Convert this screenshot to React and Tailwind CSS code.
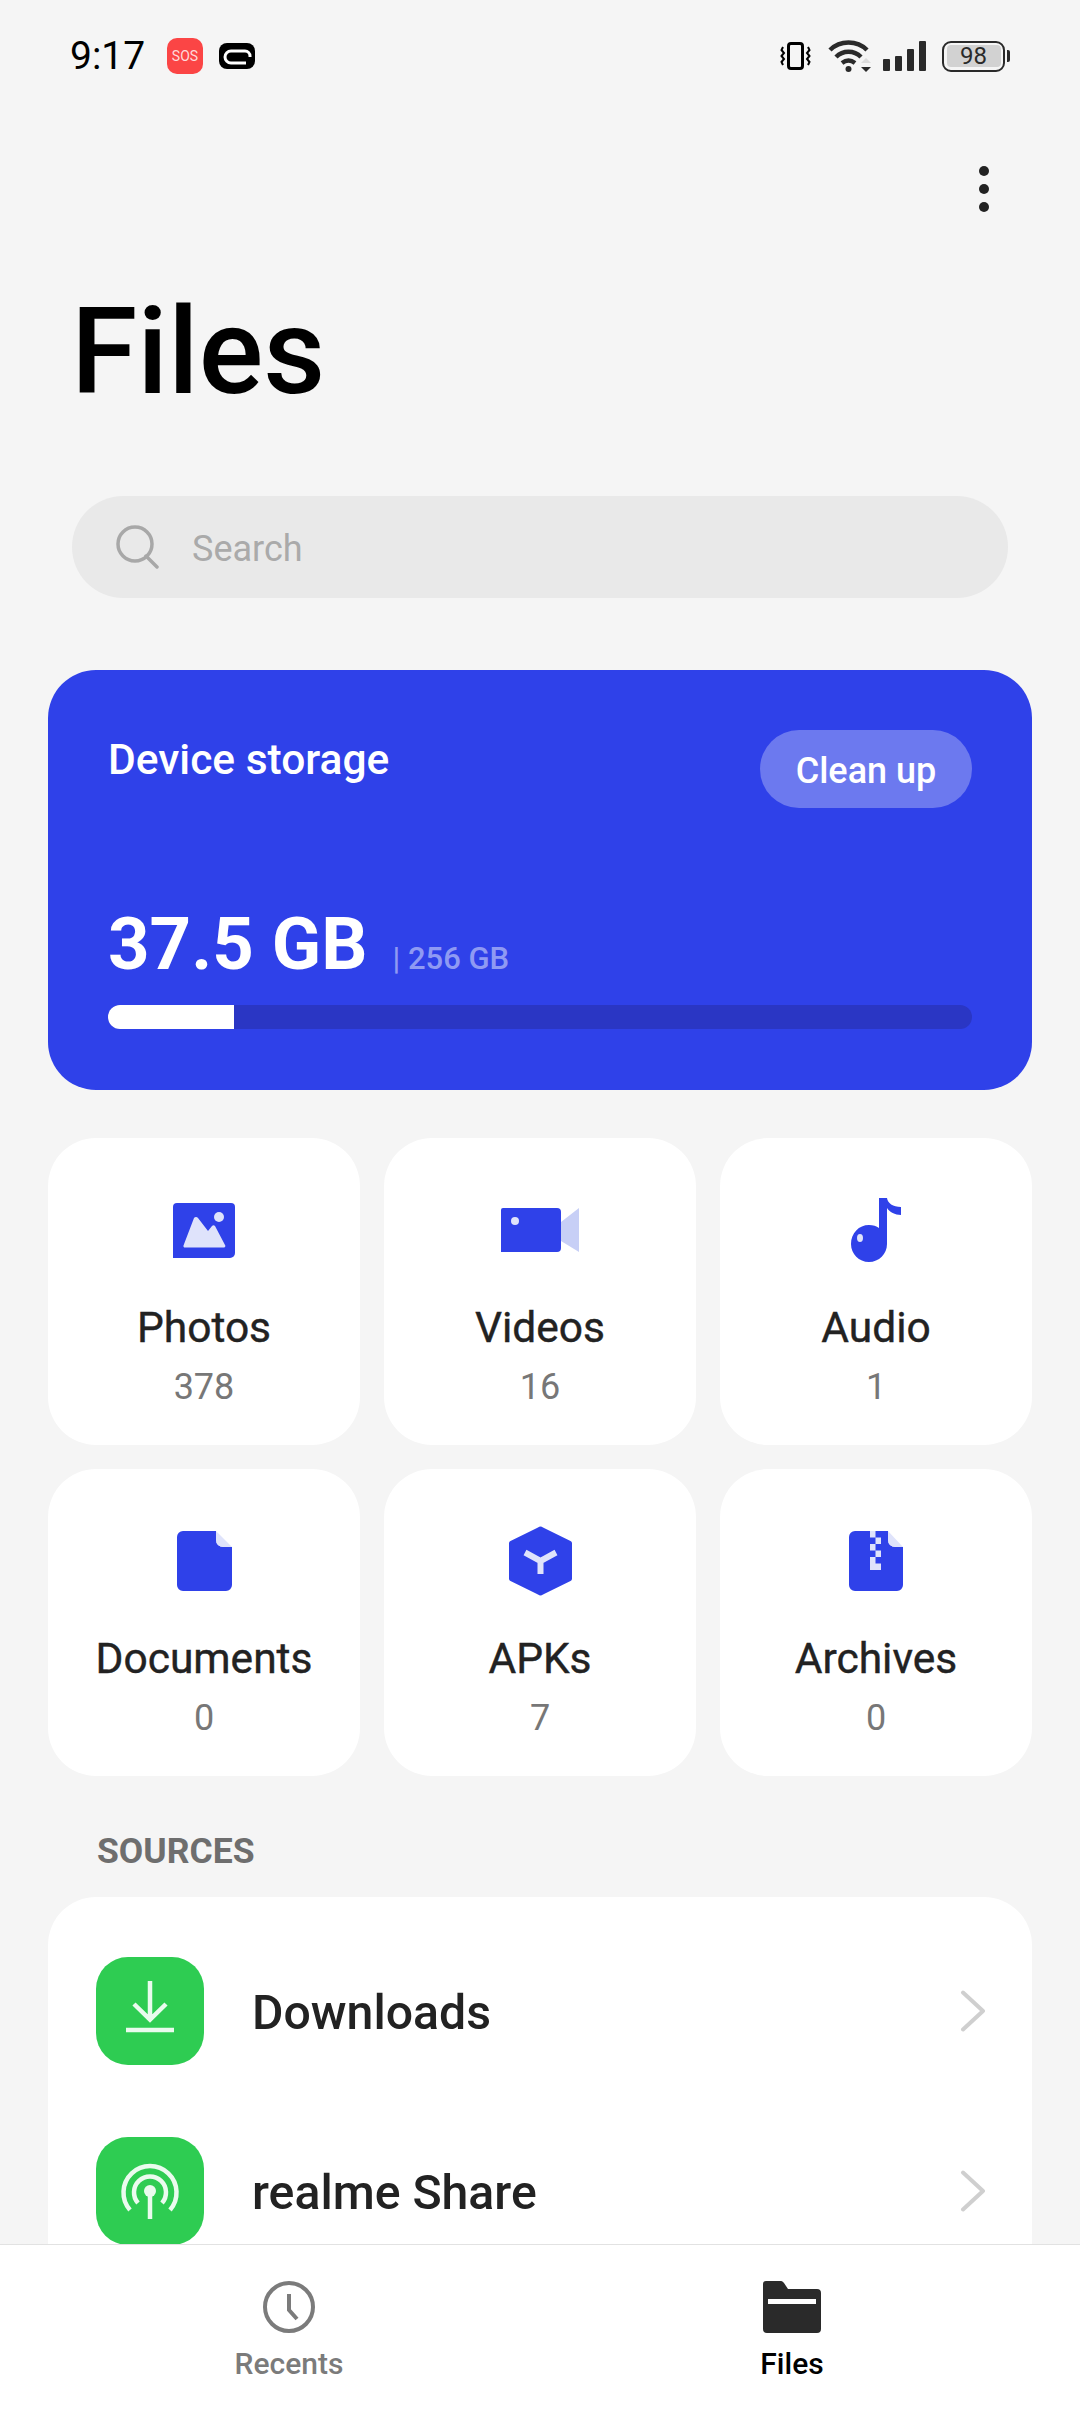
const blue = "#2f41e9";
const pale = "#dfe3fb";

const Photos = () => (
  <svg width="62" height="55" viewBox="0 0 62 55">
    <path d="M4 0H58a4 4 0 0 1 4 4V50a5 5 0 0 1-5 5H0V4a4 4 0 0 1 4-4z" fill={blue} />
    <path d="M21 15a2.500 2.500 0 0 1 4 0L35 28L39 23a2 2 0 0 1 3 0L52 42a1.500 1.500 0 0 1-1 2.500H12a1.500 1.500 0 0 1-1.500-2z" fill={pale} />
    <ellipse cx="46" cy="14" rx="5" ry="5" fill={pale} />
  </svg>
);
const Videos = () => (
  <svg width="78" height="44" viewBox="0 0 78 44">
    <path d="M2 0H56a4 4 0 0 1 4 4V40a4 4 0 0 1-4 4H0V2a2 2 0 0 1 2-2z" fill={blue} />
    <path d="M60 14L78 0V44L60 33z" fill="#c7cff6" />
    <circle cx="14" cy="13" r="4" fill={pale} />
  </svg>
);
const Audio = () => (
  <svg width="50" height="64" viewBox="0 0 50 64">
    <path d="M28 0H36C36.500 5 42 9 50 9V17C44 17 38.500 14 36 10V46C36 56 28 64 18 64C8 64 0 56 0 46C0 35 8 27 18 27C22 27 25.500 28 28 30z" fill={blue} />
    <ellipse cx="9" cy="40" rx="3" ry="4" fill={pale} />
  </svg>
);
const Doc = () => (
  <svg width="55" height="60" viewBox="0 0 55 60">
    <path d="M6 0H39V8Q39 16 47 16H55V54a6 6 0 0 1-6 6H6a6 6 0 0 1-6-6V6a6 6 0 0 1 6-6z" fill={blue} />
    <path d="M39 0L55 16H47Q39 16 39 8z" fill={pale} />
  </svg>
);
const Apk = () => (
  <svg width="63" height="70" viewBox="0 0 63 70">
    <path d="M29 1.500a4 4 0 0 1 5 0L61.500 15a3 3 0 0 1 1.500 3V52a3 3 0 0 1-1.500 3L34 68.500a4 4 0 0 1-5 0L1.500 55a3 3 0 0 1-1.500-3V18a3 3 0 0 1 1.500-3z" fill={blue} />
    <path d="M16 26.500L31.500 35L47 26.500M31.500 35V48" fill="none" stroke={pale} strokeWidth="6" />
  </svg>
);
const Archive = () => (
  <svg width="54" height="60" viewBox="0 0 54 60">
    <path d="M6 0H39V8Q39 16 47 16H54V54a6 6 0 0 1-6 6H6a6 6 0 0 1-6-6V6a6 6 0 0 1 6-6z" fill={blue} />
    <path d="M39 0L54 16H47Q39 16 39 8z" fill={pale} />
    <path d="M21 0h5.500v6.500H21zM26.500 6.500H32V13H26.500zM21 13h5.500v6.500H21zM26.500 19.500H32V26H26.500zM21 26h5.500v6.500H21zM26.500 32.500H32V39H26.500zM21 32.500h5.500V39H21z" fill={pale} />
  </svg>
);
const Download = () => (
  <svg width="56" height="60" viewBox="0 0 56 60" fill="none" stroke="#eafbee" strokeWidth="4.500">
    <path d="M28 0V38M12 23L28 38.500L44 23" />
    <path d="M4 49H52" />
  </svg>
);
const Share = () => (
  <svg width="60" height="60" viewBox="0 0 60 60" fill="none" stroke="#eafbee" strokeWidth="4.500">
    <path d="M10 49A26.500 26.500 0 1 1 50 49" />
    <path d="M18 42A16 16 0 1 1 42 42" />
    <path d="M30 30V58" />
    <circle cx="30" cy="30" r="6" fill="#eafbee" stroke="none" />
  </svg>
);
const Chevron = () => (
  <svg width="26" height="42" viewBox="0 0 26 42" fill="none" stroke="#cfcfcf" strokeWidth="4" strokeLinecap="round" strokeLinejoin="round">
    <path d="M3 2.500L23 21L3 39.500" />
  </svg>
);

const tiles = [
  ["Photos", "378", <Photos />],
  ["Videos", "16", <Videos />],
  ["Audio", "1", <Audio />],
  ["Documents", "0", <Doc />],
  ["APKs", "7", <Apk />],
  ["Archives", "0", <Archive />],
];

const StatusBar = () => (
  <div className="flex h-[112px] items-center pl-[70px] pr-[70px]">
    <span className="w-[97px] text-[39px] leading-none text-black">9:17</span>
    <span className="flex h-[36px] w-[36px] items-center justify-center rounded-[10px] bg-[#fb4545] text-[14px] leading-none text-[#ffd9d9]">SOS</span>
    <svg className="ml-[16px]" width="36" height="26" viewBox="0 0 36 26">
      <rect width="36" height="26" rx="8" fill="#000" />
      <path d="M31 14V13a5 5 0 0 0-5-5H12a6 6 0 0 0 0 12H27" fill="none" stroke="#fff" strokeWidth="3" />
    </svg>
    <div className="ml-auto flex items-center">
      <svg width="31" height="28" viewBox="0 0 31 28" fill="none" stroke="#000">
        <rect x="8.500" y="1.500" width="14" height="25" rx="2.500" strokeWidth="3" />
        <path d="M3 5L1.500 8L4 11L1.500 14L4 17L1.500 20L3 23M28 5L29.500 8L27 11L29.500 14L27 17L29.500 20L28 23" strokeWidth="2" />
      </svg>
      <svg className="ml-[17px]" width="44" height="34" viewBox="0 0 44 34">
        <g fill="none" stroke="#2a2a2a" strokeWidth="4.500">
          <path d="M2 11C12 1 29 1 39 11" />
          <path d="M8 18C15 11 26 11 33 18" />
          <path d="M14 24C18 21 23 21 27 24" />
        </g>
        <circle cx="20.500" cy="30" r="3" fill="#2a2a2a" />
        <path d="M33 24L38 19L43 24z" fill="#dcdcdc" />
        <path d="M33 28H43L38 33z" fill="#2a2a2a" />
      </svg>
      <div className="ml-[11px] flex h-[30px] items-end gap-[5px]">
        <div className="h-[12px] w-[7px] rounded-[1px] bg-[#2a2a2a]" />
        <div className="h-[15px] w-[7px] rounded-[1px] bg-[#2a2a2a]" />
        <div className="h-[22px] w-[7px] rounded-[1px] bg-[#2a2a2a]" />
        <div className="h-[30px] w-[7px] rounded-[1px] bg-[#2a2a2a]" />
      </div>
      <div className="ml-[16px] flex h-[31px] w-[63px] rounded-[9px] border-[2.5px] border-[#2a2a2a] p-[2.5px]">
        <div className="flex flex-1 items-center justify-center rounded-[4px] bg-[#d2d2d2] text-[24px] leading-none text-[#2a2a2a]">98</div>
      </div>
      <div className="ml-[2px] h-[12px] w-[3px] rounded-r-[2px] bg-[#2a2a2a]" />
    </div>
  </div>
);

export default function App() {
  return (
    <div className="flex h-[2412px] w-[1080px] flex-col overflow-hidden bg-[#f5f5f5] font-['Roboto',sans-serif]">
      <div className="min-h-0 flex-1 overflow-hidden">
        <StatusBar />
        <div className="flex h-[154px] items-center justify-end pr-[91px]">
          <div className="flex flex-col gap-[8px]">
            <span className="h-[10px] w-[10px] rounded-full bg-[#222]" />
            <span className="h-[10px] w-[10px] rounded-full bg-[#222]" />
            <span className="h-[10px] w-[10px] rounded-full bg-[#222]" />
          </div>
        </div>
        <h1 className="flex h-[168px] items-center pl-[71px] pt-[4px] text-[120.5px] leading-none font-medium text-black">Files</h1>
        <div className="mx-[72px] mt-[62px] flex h-[102px] items-center rounded-full bg-[#e9e9e9] pl-[44px]">
          <svg width="44" height="44" viewBox="0 0 44 44" fill="none" stroke="#a8a8a8" strokeWidth="3.500">
            <circle cx="19" cy="19" r="17" />
            <path d="M30 31L41 42" strokeLinecap="round" />
          </svg>
          <span className="ml-[32px] pt-[3px] text-[36px] leading-none text-[#aaaaaa]">Search</span>
        </div>

        <div className="mx-[48px] mt-[72px] flex h-[420px] flex-col rounded-[48px] bg-[#2f41e9] px-[60px] text-white">
          <div className="mt-[60px] flex items-start justify-between">
            <span className="pt-[5px] text-[42.5px] leading-[50px] font-medium">Device storage</span>
            <span className="flex h-[78px] w-[212px] items-center justify-center rounded-full bg-[#6c79ef] pt-[3px] text-[36px] leading-none font-medium">Clean up</span>
          </div>
          <div className="mt-[95px] flex items-baseline">
            <span className="text-[72.5px] leading-[84px] font-bold">37.5 GB</span>
            <span className="ml-[25px] text-[31px] leading-none font-medium text-[#8f9af3]">| 256 GB</span>
          </div>
          <div className="mt-[18px] h-[24px] overflow-hidden rounded-full bg-[#2a36c4]">
            <div className="h-full w-[126px] bg-white" />
          </div>
        </div>

        <div className="mx-[48px] mt-[48px] grid grid-cols-3 gap-[24px]">
          {tiles.map(([name, count, icon]) => (
            <div key={name} className="flex h-[307px] flex-col items-center rounded-[48px] bg-white pt-[52px]">
              <div className="flex h-[80px] items-center justify-center">{icon}</div>
              <span className="mt-[30px] text-[42.5px] leading-[56px] text-[#222222] [-webkit-text-stroke:0.4px_#222222]">{name}</span>
              <span className="mt-[9px] text-[36px] leading-[44px] text-[#777777]">{count}</span>
            </div>
          ))}
        </div>

        <div className="ml-[97px] mt-[50px] h-[50px] text-[35.5px] leading-[50px] font-bold text-[#6e6e6e]">SOURCES</div>

        <div className="mx-[48px] mt-[21px] flex flex-col gap-[72px] rounded-t-[48px] bg-white px-[48px] pt-[60px]">
          {[["Downloads", <Download />], ["realme Share", <Share />]].map(([name, icon]) => (
            <div key={name} className="flex h-[108px] shrink-0 items-center">
              <div className="flex h-[108px] w-[108px] shrink-0 items-center justify-center rounded-[32px] bg-[#2ecc52]">{icon}</div>
              <span className="ml-[48px] flex-1 pt-[4px] text-[48.2px] leading-none font-medium text-[#222222]">{name}</span>
              <div className="mr-[-2px]"><Chevron /></div>
            </div>
          ))}
        </div>
      </div>

      <div className="flex h-[168px] shrink-0 border-t-[1px] border-[#e2e2e2] bg-white">
        <div className="flex w-[578px] flex-col items-center pt-[36px]">
          <svg width="52" height="52" viewBox="0 0 52 52" fill="none" stroke="#7b7b7b">
            <circle cx="26" cy="26" r="24" strokeWidth="4" />
            <path d="M26 13V29L34 38" strokeWidth="4" />
          </svg>
          <span className="mt-[13px] text-[30px] leading-[36px] font-medium text-[#7b7b7b]">Recents</span>
        </div>
        <div className="flex w-[428px] flex-col items-center pt-[36px]">
          <svg width="58" height="52" viewBox="0 0 58 52">
            <path d="M0 3a3 3 0 0 1 3-3H17a4 4 0 0 1 4 2L25 8H54a4 4 0 0 1 4 4V48a4 4 0 0 1-4 4H4a4 4 0 0 1-4-4z" fill="#2a2a2a" />
            <path d="M5 18H53V23H5z" fill="#fff" />
          </svg>
          <span className="mt-[13px] text-[30px] leading-[36px] font-medium text-black">Files</span>
        </div>
      </div>
    </div>
  );
}
